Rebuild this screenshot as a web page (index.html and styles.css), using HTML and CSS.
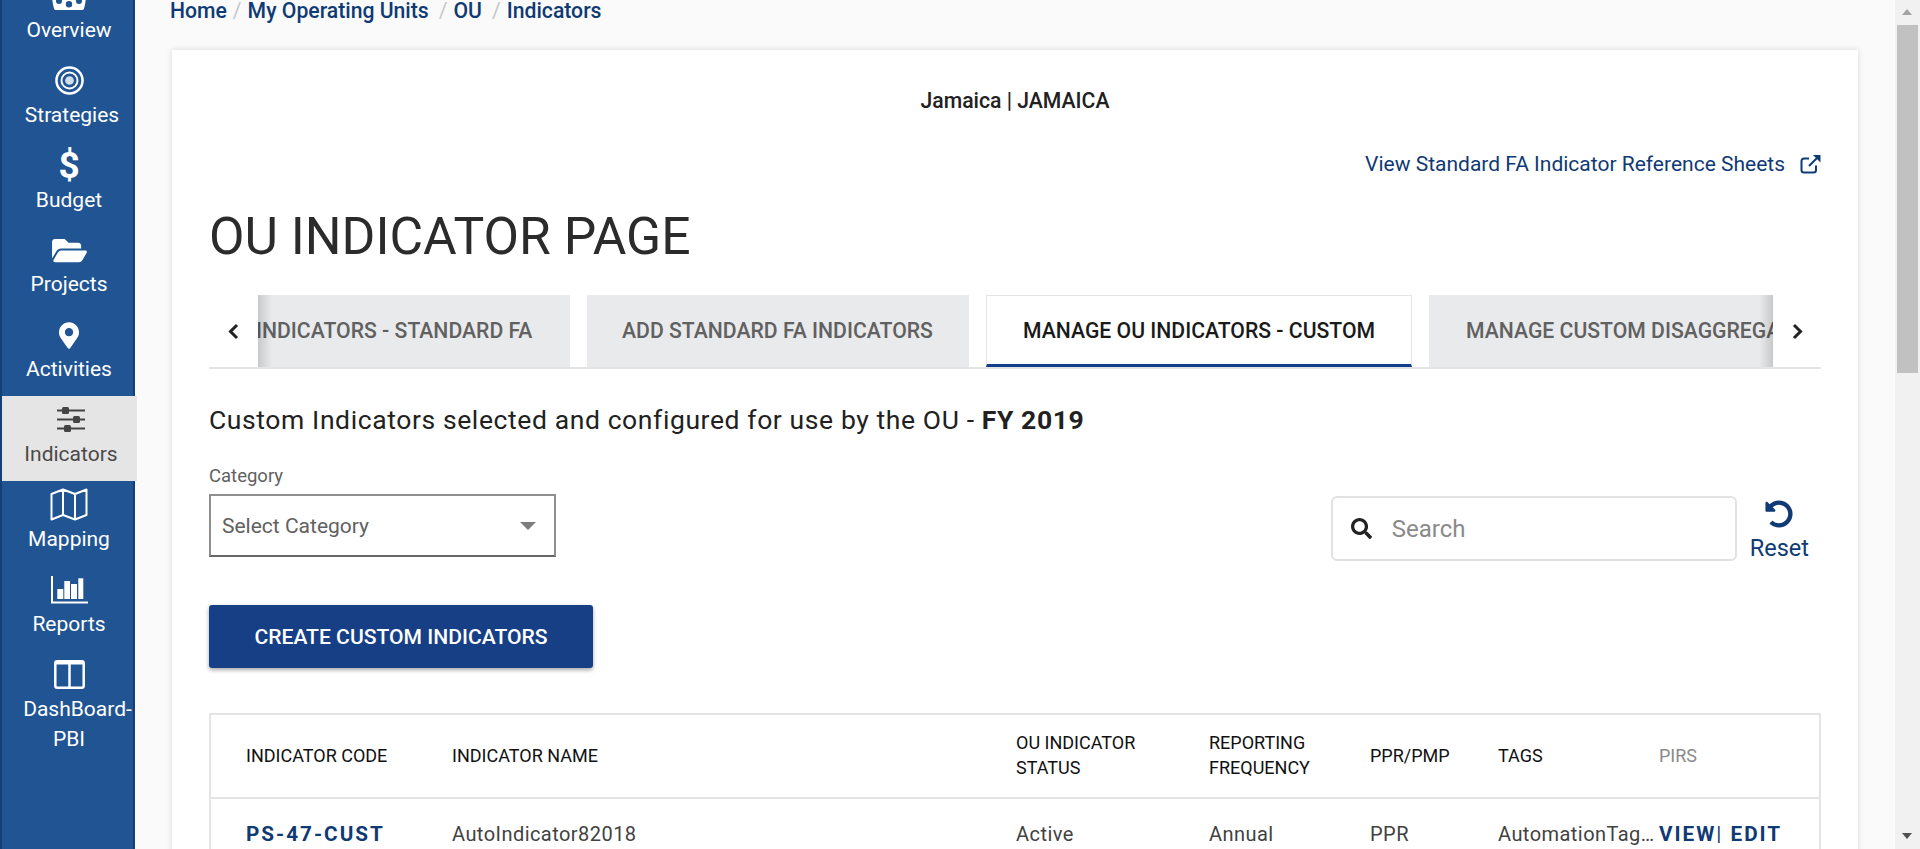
FILE: index.html
```html
<!DOCTYPE html>
<html lang="en">
<head>
<meta charset="utf-8">
<title>OU Indicator Page</title>
<link rel="stylesheet" href="styles.css">
</head>
<body>
<div class="app">
  <nav class="sidebar">
    <a class="nav-item">
      <span class="nav-icon"><svg width="34" height="30" viewBox="0 0 34 30"><path fill="#fff" fill-rule="evenodd" d="M0 12C0 6 6 0 17 0s17 6 17 12c0 6-.6 11-2 15.500-.4 1-1.200 1.500-2.200 1.500H4.200c-1 0-1.800-.5-2.200-1.500C.6 23 0 18 0 12zM17 20a3.200 3.200 0 1 0 0 6.400 3.200 3.200 0 0 0 0-6.400zM7 17a3 3 0 1 0 0 6 3 3 0 0 0 0-6zM27 17a3 3 0 1 0 0 6 3 3 0 0 0 0-6z"/></svg></span>
      <span class="nav-label">Overview</span>
    </a>
    <a class="nav-item">
      <span class="nav-icon"><svg width="29" height="29" viewBox="0 0 30 30" fill="none" stroke="#fff"><circle cx="15" cy="15" r="13.500" stroke-width="2.600"/><circle cx="15" cy="15" r="8.300" stroke-width="2"/><circle cx="15" cy="15" r="4.500" fill="#fff" fill-opacity=".8" stroke="none"/></svg></span>
      <span class="nav-label nudge">Strategies</span>
    </a>
    <a class="nav-item">
      <span class="nav-icon"><span class="dollar">$</span></span>
      <span class="nav-label">Budget</span>
    </a>
    <a class="nav-item">
      <span class="nav-icon"><svg width="35" height="31" viewBox="0 0 576 512"><path fill="#fff" d="M572.694 292.093L500.27 416.248A63.997 63.997 0 0 1 444.989 448H45.025c-18.523 0-30.064-20.093-20.731-36.093l72.424-124.155A64 64 0 0 1 152 256h399.964c18.523 0 30.064 20.093 20.73 36.093zM152 224h328v-48c0-26.51-21.49-48-48-48H272l-64-64H48C21.49 64 0 85.49 0 112v278.046l69.077-118.418C86.214 242.25 117.989 224 152 224z"/></svg></span>
      <span class="nav-label">Projects</span>
    </a>
    <a class="nav-item">
      <span class="nav-icon"><svg width="20" height="29" viewBox="0 0 384 512"><path fill="#fff" d="M172.268 501.67C26.97 291.031 0 268.413 0 192 0 85.961 85.961 0 192 0s192 85.961 192 192c0 76.413-26.97 99.031-172.268 309.67-9.535 13.774-29.93 13.773-39.464 0zM192 272c44.183 0 80-35.817 80-80s-35.817-80-80-80-80 35.817-80 80 35.817 80 80 80z"/></svg></span>
      <span class="nav-label">Activities</span>
    </a>
    <a class="nav-item active">
      <span class="nav-icon"><svg width="28" height="26" viewBox="0 0 28 26" fill="#444"><path d="M0 3.500h5M12 3.500h16M0 12.500h16M23 12.500h5M0 21.500h7M14 21.500h14" stroke="#444" stroke-width="2" fill="none"/><rect x="5" y="0" width="7" height="7" rx="1.500"/><rect x="16" y="9" width="7" height="7" rx="1.500"/><rect x="7" y="18" width="7" height="7" rx="1.500"/></svg></span>
      <span class="nav-label">Indicators</span>
    </a>
    <a class="nav-item">
      <span class="nav-icon"><svg width="38" height="33" viewBox="0 0 38 33" fill="none" stroke="#fff" stroke-width="2" stroke-linejoin="round"><path d="M1.500 6L13 1.500l12 4.500 11.500-4.500V27L25 31.500 13 27 1.500 31.500zM13 1.500V27M25 6v25.500"/></svg></span>
      <span class="nav-label">Mapping</span>
    </a>
    <a class="nav-item">
      <span class="nav-icon"><svg width="37" height="28" viewBox="0 0 37 28" fill="#fff"><path d="M1 0v26.500h36" fill="none" stroke="#fff" stroke-width="2"/><rect x="6.300" y="13" width="6" height="10"/><rect x="13.300" y="5" width="5.700" height="18"/><rect x="20" y="8" width="6" height="15"/><rect x="27.300" y="2.300" width="5" height="20.700"/></svg></span>
      <span class="nav-label">Reports</span>
    </a>
    <a class="nav-item">
      <span class="nav-icon"><svg width="31" height="29" viewBox="0 0 31 29" fill="none" stroke="#fff" stroke-width="2.500"><rect x="1.300" y="1.300" width="28.400" height="26.400" rx="2"/><path d="M15.500 1.300v26.400"/><path d="M1.300 3h28.400" stroke-width="3"/></svg></span>
      <span class="nav-label dash">DashBoard-PBI</span>
    </a>
  </nav>

  <main class="main">
    <div class="breadcrumb">
      <a>Home</a><span class="sep">/</span><a>My Operating Units</a><span class="sep wide">/</span><a>OU</a><span class="sep wide">/</span><a>Indicators</a>
    </div>
    <section class="card">
      <div class="unit">Jamaica | JAMAICA</div>
      <div class="ref-row">
        <a class="ref-link">View Standard FA Indicator Reference Sheets</a>
        <svg class="ref-icon" width="21" height="20" viewBox="0 0 21 20" fill="none" stroke="#0f3a74" stroke-width="2"><path d="M16 11.500V16a2.500 2.500 0 0 1-2.500 2.500H4A2.500 2.500 0 0 1 1.500 16V7A2.500 2.500 0 0 1 4 4.500h5"/><path d="M9 12L19 2"/><path d="M13 1h7.500v7.500z" fill="#0f3a74" stroke="none"/></svg>
      </div>
      <h1 class="title">OU INDICATOR PAGE</h1>

      <div class="tabs">
        <button class="tab-arrow left"><svg width="12" height="17" viewBox="0 0 12 17" fill="none" stroke="#222" stroke-width="3"><path d="M10 2L3.500 8.500l6.500 6.500"/></svg></button>
        <div class="tab-strip">
          <div class="tab tab-first">INDICATORS - STANDARD FA</div>
          <div class="tab tab-second">ADD STANDARD FA INDICATORS</div>
          <div class="tab tab-active">MANAGE OU INDICATORS - CUSTOM</div>
          <div class="tab tab-last">MANAGE CUSTOM DISAGGREGATIONS</div>
          <span class="fade fade-left"></span>
          <span class="fade fade-right"></span>
        </div>
        <button class="tab-arrow right"><svg width="12" height="17" viewBox="0 0 12 17" fill="none" stroke="#222" stroke-width="3"><path d="M2 2l6.500 6.500L2 15"/></svg></button>
      </div>

      <p class="subhead">Custom Indicators selected and configured for use by the OU - <b>FY 2019</b></p>

      <div class="filters">
        <div class="field">
          <label class="field-label">Category</label>
          <div class="select">
            <span>Select Category</span>
            <span class="caret"></span>
          </div>
        </div>
        <div class="search-group">
          <div class="search">
            <svg width="21" height="21" viewBox="0 0 512 512"><path fill="#222" d="M505 442.7L405.3 343c-4.500-4.500-10.600-7-17-7H372c27.600-35.300 44-79.700 44-128C416 93.100 322.900 0 208 0S0 93.100 0 208s93.100 208 208 208c48.300 0 92.700-16.400 128-44v16.300c0 6.400 2.500 12.500 7 17l99.700 99.700c9.400 9.400 24.600 9.400 33.900 0l28.300-28.300c9.400-9.400 9.400-24.600.1-34zM208 336c-70.700 0-128-57.200-128-128 0-70.700 57.200-128 128-128 70.700 0 128 57.200 128 128 0 70.700-57.200 128-128 128z"/></svg>
            <span class="placeholder">Search</span>
          </div>
          <a class="reset">
            <svg width="28" height="28" viewBox="0 0 512 512"><path fill="#0f3a74" d="M255.545 8c-66.269.119-126.438 26.233-170.860 68.685L48.971 40.971C33.851 25.851 8 36.559 8 57.941V192c0 13.255 10.745 24 24 24h134.059c21.382 0 32.090-25.851 16.971-40.971l-41.750-41.750c30.864-28.899 70.801-44.907 113.230-45.273 92.398-.798 170.283 73.977 169.484 169.442C423.236 348.009 349.816 424 256 424c-41.127 0-79.997-14.678-110.630-41.556-4.743-4.161-11.906-3.908-16.368.553L89.340 422.659c-4.872 4.872-4.631 12.815.482 17.433C133.798 479.813 192.074 504 256 504c136.966 0 247.999-111.033 248-247.998C504.001 119.193 392.354 7.755 255.545 8z"/></svg>
            <span>Reset</span>
          </a>
        </div>
      </div>

      <button class="create">CREATE CUSTOM INDICATORS</button>

      <div class="table">
        <div class="row head">
          <div class="c code">INDICATOR CODE</div>
          <div class="c name">INDICATOR NAME</div>
          <div class="c status">OU INDICATOR<br>STATUS</div>
          <div class="c freq">REPORTING<br>FREQUENCY</div>
          <div class="c ppr">PPR/PMP</div>
          <div class="c tags">TAGS</div>
          <div class="c pirs muted">PIRS</div>
        </div>
        <div class="row body">
          <div class="c code link-strong">PS-47-CUST</div>
          <div class="c name">AutoIndicator82018</div>
          <div class="c status">Active</div>
          <div class="c freq">Annual</div>
          <div class="c ppr">PPR</div>
          <div class="c tags ellipsis">AutomationTag1, Tag2</div>
          <div class="c pirs link-strong">VIEW<span class="bar">|</span> EDIT</div>
        </div>
      </div>
    </section>
  </main>

  <div class="scrollbar">
    <span class="sb-btn up"></span>
    <span class="sb-thumb"></span>
    <span class="sb-rest"></span>
    <span class="sb-btn down"></span>
  </div>
</div>
</body>
</html>
```
FILE: styles.css
```css
* { box-sizing: border-box; }
html, body { margin: 0; height: 100%; overflow: hidden; }
body { font-family: Roboto, "Liberation Sans", sans-serif; background: #fafafa; color: #212121; }
a { color: inherit; text-decoration: none; }
button { font-family: inherit; border: 0; background: none; padding: 0; }

.app { display: flex; height: 849px; overflow: hidden; }

.sidebar { width: 135px; flex: none; height: 878px; margin-top: -28.200px; background: #205493; border-left: 2px solid #153e75; border-right: 2px solid #153e75; }
.nav-item { display: flex; flex-direction: column; align-items: center; height: 84.850px; padding-left: 3px; color: #fff; text-align: center; }
.nav-icon { flex: none; height: 43px; padding-top: 5px; display: flex; align-items: center; justify-content: center; }
.nav-label { flex: none; font-size: 21px; line-height: 30px; width: 112px; }
.nav-label.nudge { padding-left: 6px; }
.nav-label.dash { width: 128px; text-indent: 17px; }
.dollar { font-size: 37px; font-weight: 700; line-height: 38px; }
.nav-item.active { background: #e5e5e5; color: #4a4a4a; width: 135px; }
.nav-item.active svg { display: block; }

.main { flex: 1; min-width: 0; padding: 0 37px; }
.breadcrumb { height: 50px; margin-top: -3px; margin-left: -2px; font-size: 21.200px; line-height: 28px; color: #0f3a74; font-weight: 500; margin-bottom: 3px; }
.sep { color: #c8c8c8; padding: 0 6px; font-weight: 400; }
.sep.wide { padding: 0 6px 0 10px; }

.card { background: #fff; height: 900px; padding: 0 37px; box-shadow: 0 0 6px rgba(0,0,0,.14); }
.unit { text-align: center; font-size: 21.200px; font-weight: 500; padding-top: 38px; line-height: 26px; }
.ref-row { display: flex; justify-content: flex-end; align-items: center; gap: 15px; margin-top: 37px; height: 26px; color: #0f3a74; font-size: 21px; }
.title { font-size: 51.600px; font-weight: 400; margin: 30px 0 0; line-height: 60px; color: #2b2b2b; }

.tabs { display: flex; align-items: stretch; margin-top: 28px; height: 74px; border-bottom: 2px solid #e4e4e4; }
.tab-arrow { width: 49px; flex: none; display: flex; align-items: center; justify-content: center; }
.tab-arrow.left svg { margin-right: 2px; }
.tab-arrow.right { width: 48px; }
.tab-arrow.right svg { margin-left: 2px; }
.tab-strip { flex: 1; min-width: 0; display: flex; gap: 17px; overflow: hidden; position: relative; }
.tab { flex: none; background: #e9eaec; color: #616161; font-size: 21.200px; font-weight: 500; display: flex; align-items: center; height: 72px; padding-bottom: 2px; white-space: nowrap; }
.tab-first { width: 312px; padding-left: 0; text-indent: -2px; }
.tab-second { width: 382px; padding-left: 35px; }
.tab-active { width: 426px; padding: 0 0 0 36px; background: #fff; color: #1a1a1a; border: 1px solid #e4e4e4; border-bottom: 3px solid #153e8a; }
.tab-last { width: 400px; padding-left: 37px; }
.fade { position: absolute; top: 0; bottom: 0; width: 14px; }
.fade-left { left: 0; background: linear-gradient(to right, rgba(0,0,0,.14), rgba(0,0,0,0)); }
.fade-right { right: 0; background: linear-gradient(to left, rgba(0,0,0,.14), rgba(0,0,0,0)); }

.subhead { font-size: 26.500px; margin: 34px 0 0; line-height: 34px; letter-spacing: .6px; }
.subhead b { font-weight: 700; }

.filters { display: flex; justify-content: space-between; margin-top: 28px; }
.field { width: 347px; }
.field-label { display: block; font-size: 18.500px; line-height: 22px; color: #616161; margin-bottom: 7px; }
.select { height: 63px; border: 2px solid #8f8f8f; border-bottom-color: #666; display: flex; align-items: center; justify-content: space-between; padding: 0 18px 0 11px; font-size: 21px; color: #616161; }
.caret { width: 0; height: 0; border-left: 8px solid transparent; border-right: 8px solid transparent; border-top: 8px solid #7d7d7d; }
.search-group { display: flex; align-items: flex-start; margin-top: 1px; margin-right: 12px; }
.search { width: 406px; height: 65px; margin-top: 30px; border: 2px solid #e2e2e2; border-radius: 6px; display: flex; align-items: center; gap: 20px; padding-left: 18px; }
.placeholder { font-size: 24px; color: #8a8a8a; }
.reset { display: flex; flex-direction: column; align-items: center; margin-left: 13px; margin-top: 34px; color: #0f3a74; font-size: 23.500px; line-height: 30px; gap: 5px; }

.create { display: block; width: 384px; height: 63px; margin-top: 42px; background: #163f86; color: #fff; font-size: 21.100px; font-weight: 500; border-radius: 3px; box-shadow: 0 2px 4px rgba(0,0,0,.35); }

.table { margin-top: 45px; border: 2px solid #e4e4e4; }
.row { display: flex; align-items: center; font-size: 18px; padding-left: 35px; }
.row.head { height: 84px; color: #111; line-height: 25px; padding-bottom: 2px; border-bottom: 2px solid #e4e4e4; }
.row.body { height: 70px; font-size: 20px; color: #424242; letter-spacing: .45px; }
.c { flex: none; }
.code { width: 206px; }
.name { width: 564px; }
.status { width: 193px; }
.freq { width: 161px; }
.ppr { width: 128px; }
.tags { width: 161px; }
.pirs { width: 130px; white-space: nowrap; }
.muted { color: #8a8a8a; }
.row.body .link-strong { color: #0f3a74; font-weight: 700; letter-spacing: 2px; font-size: 20.700px; }
.bar { font-weight: 400; }
.ellipsis { white-space: nowrap; overflow: hidden; text-overflow: ellipsis; padding-right: 4px; }

.scrollbar { width: 25px; flex: none; height: 849px; background: #f1f1f1; display: flex; flex-direction: column; align-items: center; }
.sb-btn { height: 25px; flex: none; width: 100%; position: relative; }
.sb-btn::after { content: ""; position: absolute; left: 7px; width: 0; height: 0; border-left: 5.500px solid transparent; border-right: 5.500px solid transparent; }
.up::after { top: 9px; border-bottom: 6px solid #a3a3a3; }
.down::after { top: 9px; border-top: 6px solid #505050; }
.sb-thumb { width: 21px; height: 348px; background: #c1c1c1; flex: none; }
.sb-rest { flex: 1; }
```
